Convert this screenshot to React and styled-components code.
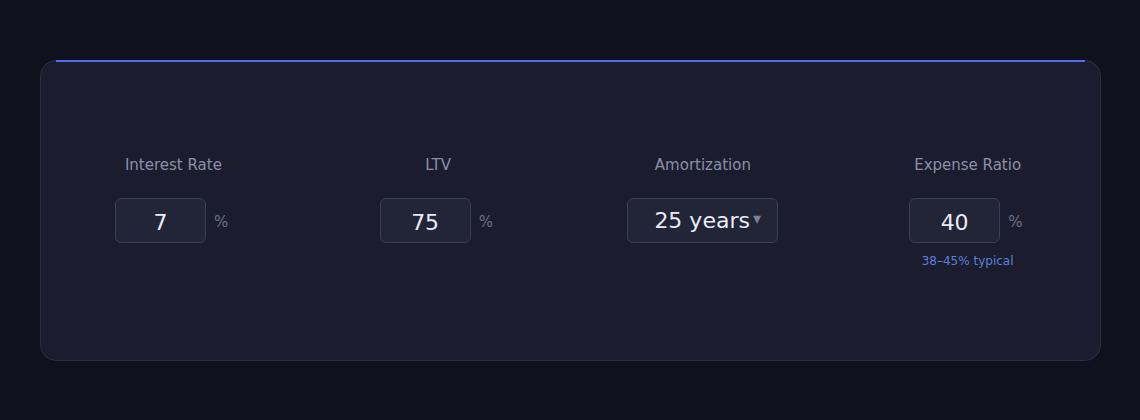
import React from "react";
import styled, { createGlobalStyle } from "styled-components";

const fields = [
  { label: "Interest Rate", value: "7", unit: "%" },
  { label: "LTV", value: "75", unit: "%" },
  { label: "Amortization", select: "25 years" },
  { label: "Expense Ratio", value: "40", unit: "%", hint: "38–45% typical" },
];

const App = () => {
  return (
    <>
      <GlobalStyle />
      <Page>
        <Card>
          <Grid>
            {fields.map((f) => (
              <Field key={f.label}>
                <Label>{f.label}</Label>
                {f.select ? (
                  <SelectBox>
                    <SelectText>{f.select}</SelectText>
                    <Arrow>▾</Arrow>
                  </SelectBox>
                ) : (
                  <InputRow>
                    <NumberBox>{f.value}</NumberBox>
                    <Unit>{f.unit}</Unit>
                  </InputRow>
                )}
                {f.hint && <Hint>{f.hint}</Hint>}
              </Field>
            ))}
          </Grid>
        </Card>
      </Page>
    </>
  );
};

export default App;

const GlobalStyle = createGlobalStyle`
  body {
    margin: 0;
    background: #0f111c;
    font-family: "DejaVu Sans", sans-serif;
  }
`;

const Page = styled.div`
  padding: 60px 39px 59px 40px;
  min-height: 420px;
  box-sizing: border-box;
`;

const Card = styled.div`
  position: relative;
  height: 301px;
  box-sizing: border-box;
  background: #1b1d2e;
  border: 1px solid #2b2e43;
  border-radius: 16px;
  padding-top: 95px;

  &::before {
    content: "";
    position: absolute;
    top: -1px;
    left: 15px;
    right: 15px;
    height: 2px;
    background: #4f6cf2;
  }
`;

const Grid = styled.div`
  display: grid;
  grid-template-columns: repeat(4, 1fr);
`;

const Field = styled.div`
  display: flex;
  flex-direction: column;
  align-items: center;
`;

const Label = styled.div`
  font-size: 15px;
  line-height: 18px;
  color: #8b8fa6;
  margin-bottom: 24px;
`;

const InputRow = styled.div`
  display: flex;
  align-items: center;
  gap: 8px;
`;

const NumberBox = styled.div`
  width: 91px;
  height: 45px;
  box-sizing: border-box;
  display: flex;
  align-items: center;
  justify-content: center;
  background: #222538;
  border: 1px solid #3a3d55;
  border-radius: 6px;
  color: #e9ebf5;
  font-size: 22px;
  padding-top: 4px;
`;

const Unit = styled.span`
  font-size: 15px;
  color: #6c7089;
  width: 18px;
  margin-top: 3px;
`;

const SelectBox = styled.div`
  width: 151px;
  height: 45px;
  box-sizing: border-box;
  display: flex;
  align-items: center;
  gap: 3px;
  padding-left: 26px;
  background: #222538;
  border: 1px solid #3a3d55;
  border-radius: 6px;
`;

const SelectText = styled.span`
  color: #e9ebf5;
  font-size: 22px;
`;

const Arrow = styled.span`
  color: #7c8098;
  font-size: 16px;
  margin-top: -4px;
`;

const Hint = styled.div`
  margin-top: 11px;
  font-size: 12px;
  line-height: 14px;
  color: #5b80d9;
`;
